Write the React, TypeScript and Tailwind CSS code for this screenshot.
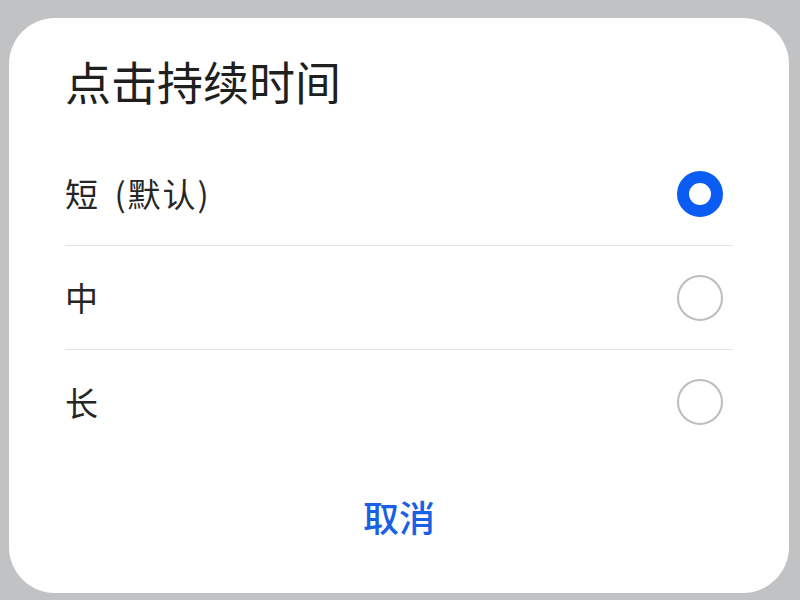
import React from "react";

const font = { fontFamily: '"Noto Sans CJK SC", "Noto Sans", sans-serif' };

function Radio({ checked }: { checked: boolean }) {
  return checked ? (
    <div className="w-[46px] h-[46px] rounded-full border-[12px] border-[#0b5cf3] bg-white" />
  ) : (
    <div className="w-[46px] h-[46px] rounded-full border-2 border-[#bdbdbd] bg-white" />
  );
}

export default function App() {
  const options = [
    { label: "短 (默认)", checked: true },
    { label: "中", checked: false },
    { label: "长", checked: false },
  ];
  return (
    <div className="w-[800px] h-[600px] bg-[#c1c2c4] pt-[18px] pl-[9px] pr-[11px]" style={font}>
      <div className="h-[575px] bg-white rounded-[46px] px-[56px] flex flex-col">
        <div className="h-[124px] flex items-center">
          <div className="text-[46px] leading-none font-normal text-[#1f1f1f]">点击持续时间</div>
        </div>
        {options.map((o, i) => (
          <div
            key={o.label}
            className={
              i < options.length - 1
                ? "h-[104px] flex items-center justify-between border-b border-[#e3e3e3] pr-[10px]"
                : "h-[104px] flex items-center justify-between pr-[10px]"
            }
          >
            <div className="text-[33px] leading-none text-[#262626] tracking-[2px] [word-spacing:5px]">{o.label}</div>
            <Radio checked={o.checked} />
          </div>
        ))}
        <div className="h-[124px] flex items-center justify-center">
          <div className="text-[36px] leading-none font-medium text-[#1b5fe2]">取消</div>
        </div>
      </div>
    </div>
  );
}
